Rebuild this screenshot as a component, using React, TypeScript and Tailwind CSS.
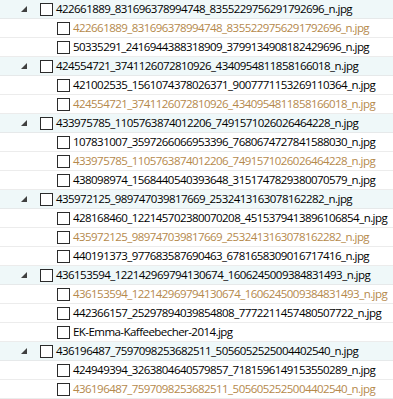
import React from 'react';

type Group = {
  name: string;
  children: { name: string; match?: boolean }[];
};

const groups: Group[] = [
  {
    name: '422661889_831696378994748_8355229756291792696_n.jpg',
    children: [
      { name: '422661889_831696378994748_8355229756291792696_n.jpg', match: true },
      { name: '50335291_2416944388318909_3799134908182429696_n.jpg' },
    ],
  },
  {
    name: '424554721_3741126072810926_4340954811858166018_n.jpg',
    children: [
      { name: '421002535_1561074378026371_9007771153269110364_n.jpg' },
      { name: '424554721_3741126072810926_4340954811858166018_n.jpg', match: true },
    ],
  },
  {
    name: '433975785_1105763874012206_7491571026026464228_n.jpg',
    children: [
      { name: '107831007_3597266066953396_7680674727841588030_n.jpg' },
      { name: '433975785_1105763874012206_7491571026026464228_n.jpg', match: true },
      { name: '438098974_1568440540393648_3151747829380070579_n.jpg' },
    ],
  },
  {
    name: '435972125_989747039817669_2532413163078162282_n.jpg',
    children: [
      { name: '428168460_122145702380070208_4515379413896106854_n.jpg' },
      { name: '435972125_989747039817669_2532413163078162282_n.jpg', match: true },
      { name: '440191373_977683587690463_6781658309016717416_n.jpg' },
    ],
  },
  {
    name: '436153594_122142969794130674_1606245009384831493_n.jpg',
    children: [
      { name: '436153594_122142969794130674_1606245009384831493_n.jpg', match: true },
      { name: '442366157_25297894039854808_7772211457480507722_n.jpg' },
      { name: 'EK-Emma-Kaffeebecher-2014.jpg' },
    ],
  },
  {
    name: '436196487_7597098253682511_5056052525004402540_n.jpg',
    children: [
      { name: '424949394_3263804640579857_7181596149153550289_n.jpg' },
      { name: '436196487_7597098253682511_5056052525004402540_n.jpg', match: true },
    ],
  },
];

const Box = () => (
  <span className="w-[13px] h-[13px] shrink-0 border border-[#2b2b2b] bg-white" />
);

const Expander = () => (
  <svg width="6" height="6" viewBox="0 0 6 6" className="shrink-0">
    <path d="M6 0 L6 6 L0 6 Z" fill="#404040" />
  </svg>
);

export default function App() {
  return (
    <div
      className="w-[393px] h-[399px] overflow-hidden bg-white text-[11.5px] tracking-[-0.55px] text-black"
      style={{ fontFamily: '"Segoe UI", "Open Sans", sans-serif' }}
    >
      {groups.map((g, i) => (
        <div key={i}>
          <div className="h-[19px] flex items-center bg-[#eff8f9] border-b border-[#e6e9ea] pl-[21px]">
            <Expander />
            <span className="ml-[13px] flex"><Box /></span>
            <span className="ml-[3px] whitespace-nowrap leading-none">{g.name}</span>
          </div>
          {g.children.map((c, j) => (
            <div key={j} className="h-[19px] flex items-center border-b border-[#ececec] pl-[57px]">
              <Box />
              <span
                className={`ml-[3px] whitespace-nowrap leading-none ${c.match ? 'text-[#b5894c]' : 'text-black'}`}
              >
                {c.name}
              </span>
            </div>
          ))}
        </div>
      ))}
    </div>
  );
}
